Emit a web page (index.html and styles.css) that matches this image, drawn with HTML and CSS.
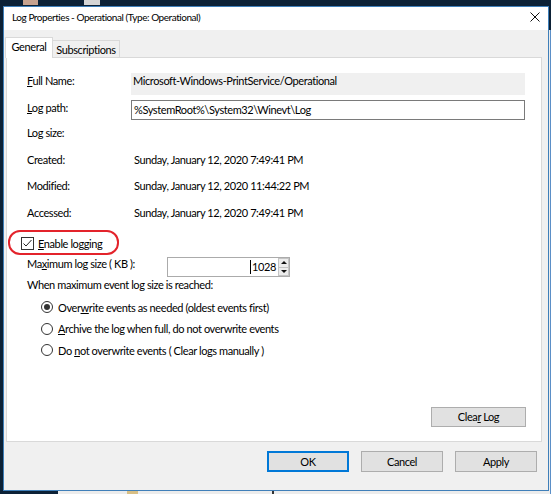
FILE: index.html
```html
<!DOCTYPE html>
<html>
<head>
<meta charset="utf-8">
<link rel="stylesheet" href="styles.css">
</head>
<body>
<div class="desk-icon di1"></div>
<div class="desk-icon di2"></div>
<div class="bg-window"><span class="bg-icon"></span><span class="bg-mark"></span></div>
<div class="window">
  <div class="titlebar">
    <span class="title">Log Properties - Operational (Type: Operational)</span>
    <svg class="close" width="10" height="10" viewBox="0 0 10 10"><path d="M0.5 0.5L9.5 9.5M9.5 0.5L0.5 9.5" stroke="#111" stroke-width="1" fill="none"/></svg>
  </div>
  <div class="tabs">
    <div class="tab active">General</div>
    <div class="tab">Subscriptions</div>
  </div>
  <div class="panel">
    <div class="row r-name"><span class="label"><u>F</u>ull Name:</span><div class="value-box">Microsoft-Windows-PrintService/Operational</div></div>
    <div class="row r-path"><span class="label"><u>L</u>og path:</span><div class="input">%SystemRoot%\System32\Winevt\Log</div></div>
    <div class="info">
      <div class="row"><span class="label">Log size:</span><span class="val"></span></div>
      <div class="row"><span class="label">Created:</span><span class="val">Sunday, January 12, 2020 7:49:41 PM</span></div>
      <div class="row"><span class="label">Modified:</span><span class="val">Sunday, January 12, 2020 11:44:22 PM</span></div>
      <div class="row"><span class="label">Accessed:</span><span class="val">Sunday, January 12, 2020 7:49:41 PM</span></div>
    </div>
    <div class="check-row">
      <span class="checkbox"><svg width="11" height="11" viewBox="0 0 11 11"><path d="M1.5 5.5L4 8L9.5 2" stroke="#222" stroke-width="1" fill="none"/></svg></span>
      <span><u>E</u>nable logging</span>
      <span class="annot"></span>
    </div>
    <div class="max-row">
      <span class="label2">Ma<u>x</u>imum log size ( KB ):</span>
      <div class="spinner">
        <div class="spin-text"><span class="caret"></span>1028</div>
        <div class="spin-btns"><span class="sb"><i class="tri-up"></i></span><span class="sb"><i class="tri-down"></i></span></div>
      </div>
    </div>
    <div class="when">When maximum event log size is reached:</div>
    <div class="radios">
      <div class="radio-row"><span class="radio checked"></span><span>Over<u>w</u>rite events as needed (oldest events first)</span></div>
      <div class="radio-row"><span class="radio"></span><span><u>A</u>rchive the log when full, do not overwrite events</span></div>
      <div class="radio-row"><span class="radio"></span><span>Do <u>n</u>ot overwrite events ( Clear logs manually )</span></div>
    </div>
    <button class="btn clear">Clea<u>r</u> Log</button>
  </div>
  <div class="footer">
    <button class="btn default">OK</button>
    <button class="btn">Cancel</button>
    <button class="btn">Apply</button>
  </div>
</div>
</body>
</html>
```
FILE: styles.css
```css
* { box-sizing: border-box; }
html, body { margin: 0; padding: 0; }
body {
  width: 551px;
  height: 494px;
  background: #0c2136;
  position: relative;
  overflow: hidden;
  font-family: Lato, Roboto, sans-serif;
  font-size: 11px;
  letter-spacing: -0.4px;
  color: #000;
}
u { text-decoration: underline; text-underline-offset: 1px; }

.desk-icon { position: absolute; top: 0; height: 5px; }
.di1 { left: 23px; width: 15px; background: #c7a28e; }
.di2 { left: 84px; width: 16px; background: #d5d5d5; }

.bg-window { position: absolute; left: 58px; top: 30px; right: 0; bottom: 0; background: #ececec; border-right: 1px solid #5b8fc7; }
.bg-icon { position: absolute; left: 69px; bottom: 0; width: 11px; height: 3px; background: #d8bf85; }
.bg-mark { position: absolute; left: 214px; bottom: 0; width: 2px; height: 3px; background: #333; }

.window {
  position: absolute;
  left: 3px; top: 6px;
  width: 546px; height: 485px;
  border: 1px solid #3f7fb9;
  background: #f0f0f0;
  display: flex;
  flex-direction: column;
}
.titlebar {
  flex: none;
  height: 23px;
  background: #fff;
  display: flex;
  align-items: flex-start;
  padding-left: 8px;
}
.title { font-size: 10px; letter-spacing: -0.45px; line-height: 16px; padding-top: 2px; }
.close { margin-left: auto; margin-right: 8px; margin-top: 5px; }

.tabs {
  flex: none;
  display: flex;
  align-items: flex-end;
  height: 21px;
  margin-top: 7px;
  margin-bottom: -1px;
  padding-left: 1px;
  position: relative;
  z-index: 1;
}
.tab {
  border: 1px solid #d9d9d9;
  border-bottom: none;
  line-height: 16px;
  text-align: center;
}
.tab.active { width: 48px; height: 21px; background: #fff; padding-top: 1px; }
.tab:not(.active) { width: 67px; height: 18px; border-left: none; background: #f0f0f0; border-bottom: 1px solid #d9d9d9; padding-top: 1px; }

.panel {
  flex: none;
  height: 385px;
  margin: 0 6px 0 2px;
  border: 1px solid #d9d9d9;
  background: #fff;
  padding: 15px 16px 14px 20px;
  display: flex;
  flex-direction: column;
}
.row { display: flex; align-items: flex-start; }
.label { width: 104px; flex: none; line-height: 15px; }
.r-name { height: 22px; }
.value-box { flex: 1; height: 22px; background: #f0f0f0; line-height: 15px; padding-left: 2px; }
.r-path { height: 20px; margin-top: 5px; }
.input { flex: 1; height: 20px; border: 1px solid #7a7a7a; line-height: 17px; padding-left: 2px; }
.info { margin-top: 5px; }
.info .row { height: 26.5px; }
.val { line-height: 15px; padding-left: 3px; }

.check-row {
  position: relative;
  margin-top: 4px;
  height: 16px;
  display: flex;
  align-items: center;
  gap: 4px;
  line-height: 17px;
}
.checkbox {
  width: 13px; height: 13px;
  margin-left: -6px;
  border: 1px solid #333;
  background: #fff;
  display: flex;
}
.annot {
  position: absolute;
  left: -19px; top: -5px;
  width: 111px; height: 25px;
  border: 2px solid #e3232b;
  border-radius: 12px;
}

.max-row { margin-top: 5px; height: 21px; display: flex; align-items: flex-start; }
.label2 { width: 140px; flex: none; line-height: 15px; }
.spinner {
  margin-top: 1px;
  width: 123px; height: 20px;
  border: 1px solid #ababab;
  display: flex;
  background: #fff;
}
.spin-text { flex: 1; text-align: right; line-height: 18px; padding-right: 2px; }
.caret { display: inline-block; width: 1px; height: 14px; background: #000; vertical-align: -3px; margin-right: 1px; }
.spin-btns { width: 11px; display: flex; flex-direction: column; }
.sb { flex: 1; border: 1px solid #c4c4c4; background: #ececec; display: flex; align-items: center; justify-content: center; }
.sb + .sb { border-top: none; }
.tri-up { width: 0; height: 0; border-left: 3px solid transparent; border-right: 3px solid transparent; border-bottom: 3px solid #111; }
.tri-down { width: 0; height: 0; border-left: 3px solid transparent; border-right: 3px solid transparent; border-top: 3px solid #111; }

.when { line-height: 15px; }
.radios { margin-top: 7px; margin-left: 14px; }
.radio-row { height: 16px; display: flex; align-items: center; gap: 5px; line-height: 17px; }
.radio-row + .radio-row { margin-top: 5.5px; }
.radio {
  width: 12px; height: 12px;
  border: 1px solid #333;
  border-radius: 50%;
  background: #fff;
  display: flex; align-items: center; justify-content: center;
}
.radio.checked::after { content: ""; width: 6px; height: 6px; border-radius: 50%; background: #333; }

.btn {
  font-family: inherit;
  font-size: 11px;
  letter-spacing: -0.4px;
  color: #000;
  background: #e1e1e1;
  border: 1px solid #adadad;
  padding: 0;
  height: 21px;
  width: 82px;
  line-height: 16px;
}
.clear { margin-top: auto; align-self: flex-end; margin-right: -1px; width: 95px; height: 20px; }
.footer { flex: none; display: flex; justify-content: flex-end; gap: 12px; padding: 9px 11px 0 0; }
.default { border: 2px solid #0078d7; }
```
